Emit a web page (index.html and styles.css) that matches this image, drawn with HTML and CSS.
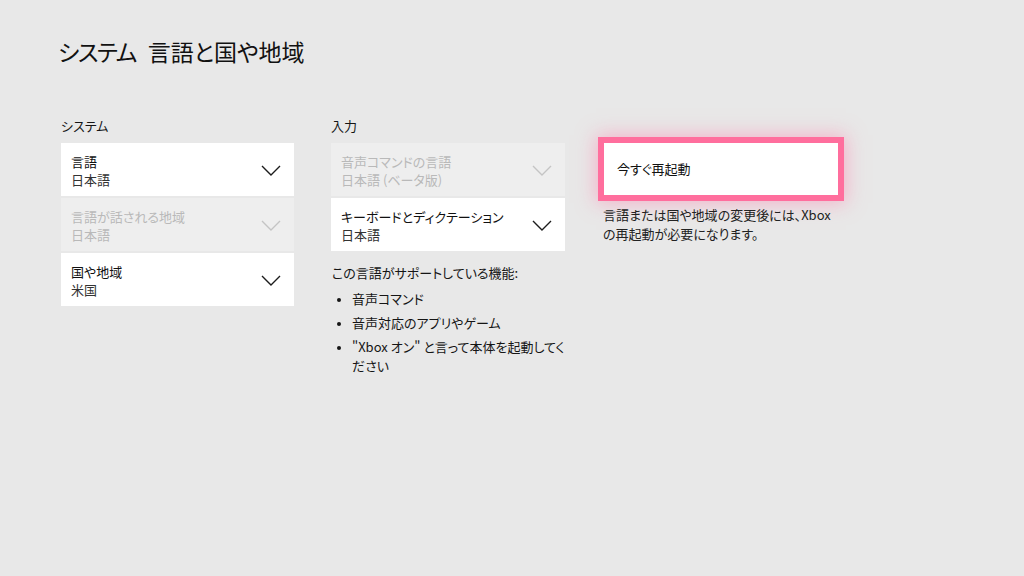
FILE: index.html
```html
<!DOCTYPE html>
<html lang="ja">
<head>
  <meta charset="UTF-8" />
  <title>言語と国や地域</title>
  <link rel="stylesheet" href="styles.css">
</head>
<body>
  <div class="page">
    <h1 class="title"><span class="title-main">システム</span><span class="title-sub">言語と国や地域</span></h1>

    <div class="columns">
      <div class="col">
        <div class="col-head">システム</div>
        <div class="card">
          <div class="card-text">
            <div class="card-label">言語</div>
            <div class="card-value">日本語</div>
          </div>
          <svg class="chev" width="20" height="11" viewBox="0 0 20 11"><polyline points="1,1 10,10 19,1" /></svg>
        </div>
        <div class="card disabled">
          <div class="card-text">
            <div class="card-label">言語が話される地域</div>
            <div class="card-value">日本語</div>
          </div>
          <svg class="chev" width="20" height="11" viewBox="0 0 20 11"><polyline points="1,1 10,10 19,1" /></svg>
        </div>
        <div class="card">
          <div class="card-text">
            <div class="card-label">国や地域</div>
            <div class="card-value">米国</div>
          </div>
          <svg class="chev" width="20" height="11" viewBox="0 0 20 11"><polyline points="1,1 10,10 19,1" /></svg>
        </div>
      </div>

      <div class="col">
        <div class="col-head">入力</div>
        <div class="card disabled">
          <div class="card-text">
            <div class="card-label">音声コマンドの言語</div>
            <div class="card-value">日本語 (ベータ版)</div>
          </div>
          <svg class="chev" width="20" height="11" viewBox="0 0 20 11"><polyline points="1,1 10,10 19,1" /></svg>
        </div>
        <div class="card">
          <div class="card-text">
            <div class="card-label">キーボードとディクテーション</div>
            <div class="card-value">日本語</div>
          </div>
          <svg class="chev" width="20" height="11" viewBox="0 0 20 11"><polyline points="1,1 10,10 19,1" /></svg>
        </div>
        <p class="features">この言語がサポートしている機能:</p>
        <ul class="feature-list">
          <li>音声コマンド</li>
          <li>音声対応のアプリやゲーム</li>
          <li>"Xbox オン" と言って本体を起動してください</li>
        </ul>
      </div>

      <div class="col col-side">
        <button class="restart">今すぐ再起動</button>
        <p class="note">言語または国や地域の変更後には、Xbox の再起動が必要になります。</p>
      </div>
    </div>
  </div>
</body>
</html>
```

FILE: styles.css
```css
body {
  margin: 0;
  background: #e8e8e8;
  color: #151515;
  font-family: "Noto Sans CJK JP", "Noto Sans", sans-serif;
  font-feature-settings: "palt";
}
.page {
  width: 1024px;
  height: 576px;
  box-sizing: border-box;
  padding: 35px 0 0 61px;
}
.title {
  margin: 0 0 0 -3px;
  font-size: 23px;
  font-weight: 400;
  line-height: 32px;
  color: #111;
}
.title-main {
  letter-spacing: -1.5px;
}
.title-sub {
  margin-left: 12px;
}
.columns {
  display: flex;
  gap: 37px;
  margin-top: 49px;
}
.col {
  width: 233px;
  display: flex;
  flex-direction: column;
  gap: 2px;
}
.col + .col {
  width: 234px;
}
.col-side {
  margin-left: 2px;
  padding-top: 27px;
}
.col-head {
  font-size: 13px;
  line-height: 19px;
  margin-bottom: 6px;
}
.card {
  height: 53px;
  background: #fff;
  display: flex;
  align-items: center;
  justify-content: space-between;
  padding: 2px 13px 0 10px;
  box-sizing: border-box;
  font-size: 13px;
  line-height: 18px;
}
.card-label {
  color: #111;
}
.card-value {
  color: #333;
}
.chev polyline {
  fill: none;
  stroke: #1c1c1c;
  stroke-width: 1.4;
}
.card.disabled {
  background: #eeeeee;
}
.card.disabled .card-label,
.card.disabled .card-value {
  color: #b9b9b9;
}
.card.disabled .chev polyline {
  stroke: #c4c4c4;
}
.features {
  margin: 10px 0 0 1px;
  font-size: 13px;
  line-height: 19px;
}
.feature-list {
  margin: 5px 0 0;
  padding: 0 0 0 21px;
  font-size: 13px;
  line-height: 19px;
}
.feature-list li {
  margin-bottom: 5px;
}
.feature-list li::marker {
  font-size: 10px;
}
.restart {
  height: 52px;
  width: 234px;
  margin: 0;
  border: none;
  background: #fff;
  outline: 6px solid #ff6e9d;
  box-shadow: 0 0 18px 8px rgba(255, 125, 170, 0.5);
  text-align: left;
  padding: 0 0 2px 13px;
  font-family: inherit;
  font-feature-settings: "palt";
  font-size: 13px;
  color: #111;
}
.note {
  margin: 8px 0 0 -1px;
  font-size: 13px;
  line-height: 19px;
  color: #222;
}
```
